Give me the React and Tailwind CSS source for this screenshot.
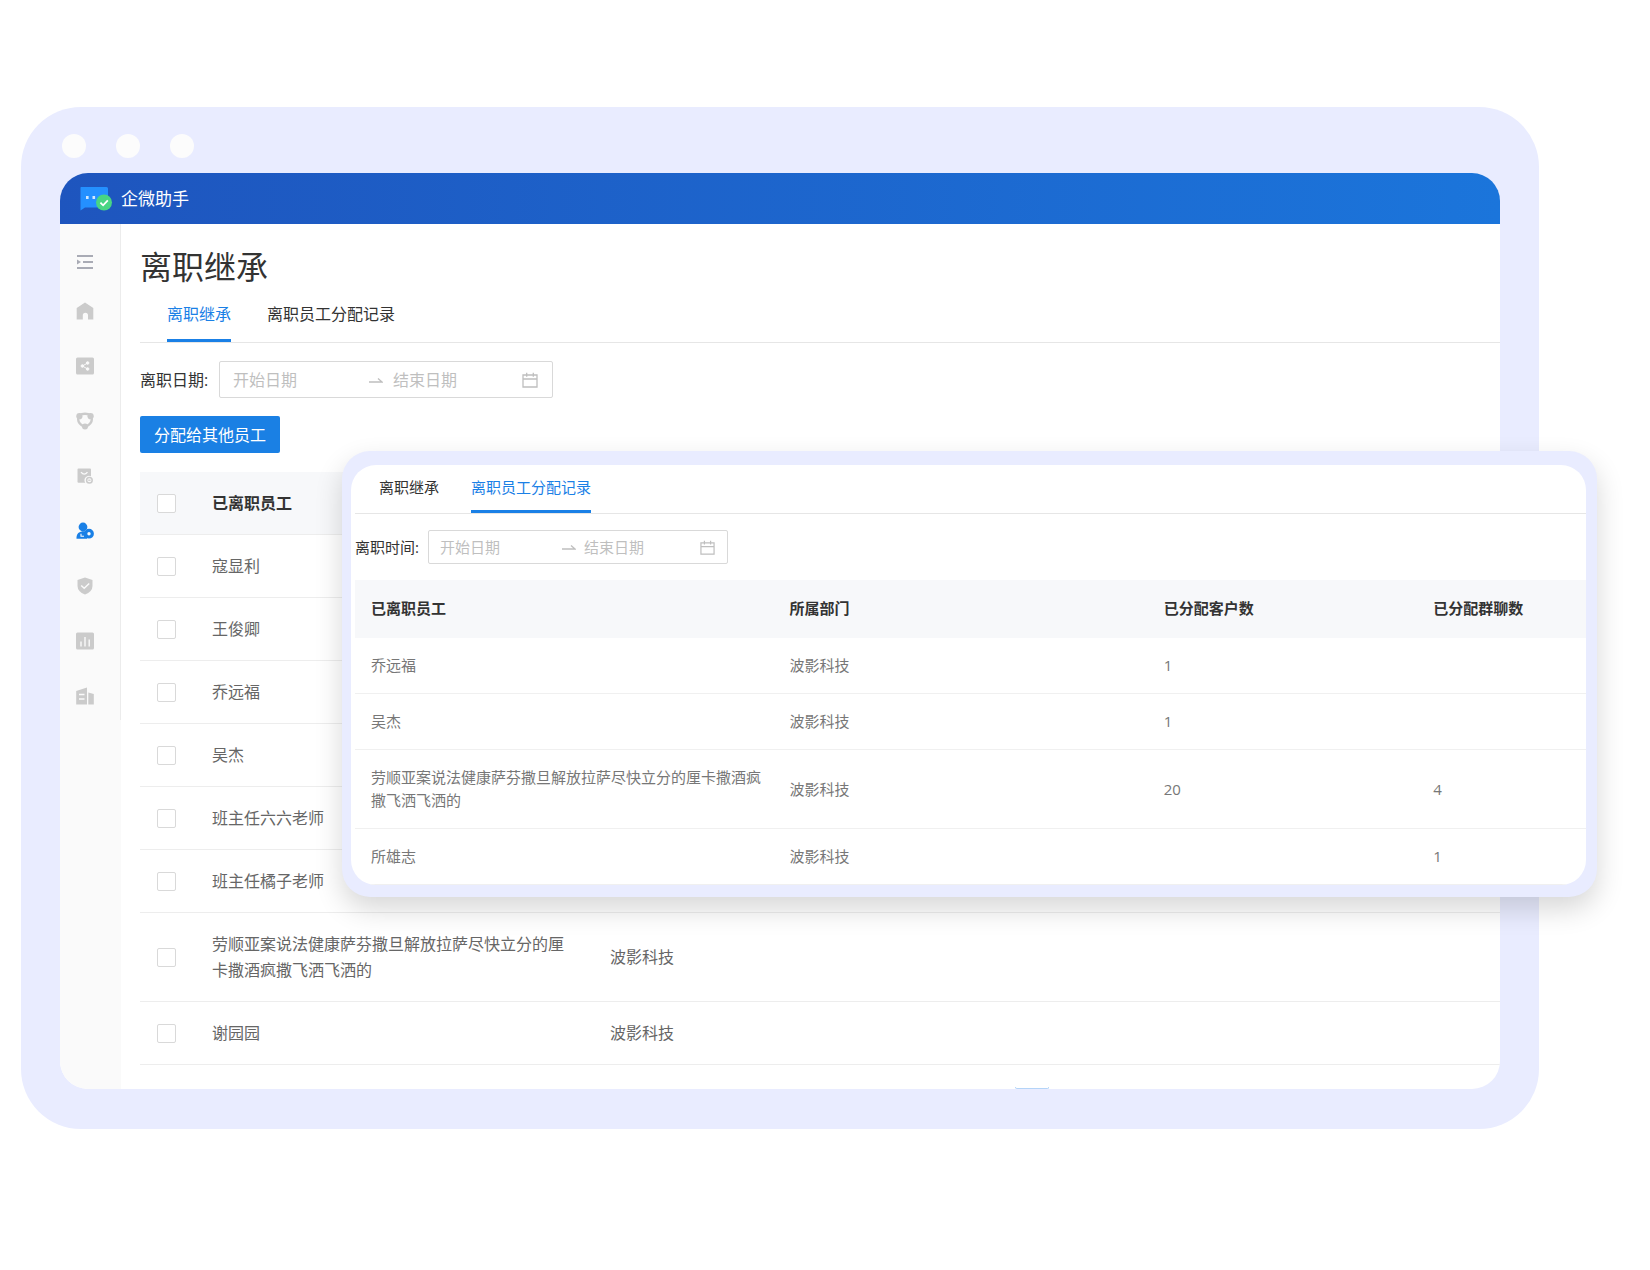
import React from "react";

const formerStaff = [
  { name: "寇显利" },
  { name: "王俊卿" },
  { name: "乔远福" },
  { name: "吴杰" },
  { name: "班主任六六老师" },
  { name: "班主任橘子老师" },
  { name: "劳顺亚案说法健康萨芬撒旦解放拉萨尽快立分的厘卡撒酒疯撒飞洒飞洒的", dept: "波影科技" },
  { name: "谢园园", dept: "波影科技" },
];

const records = [
  { name: "乔远福", dept: "波影科技", customers: "1", groups: "" },
  { name: "吴杰", dept: "波影科技", customers: "1", groups: "" },
  { name: "劳顺亚案说法健康萨芬撒旦解放拉萨尽快立分的厘卡撒酒疯撒飞洒飞洒的", dept: "波影科技", customers: "20", groups: "4" },
  { name: "所雄志", dept: "波影科技", customers: "", groups: "1" },
];

const navItems = [
  {
    label: "首页",
    art: <path d="M9 0.5 17.300 6v11.500H12v-4.200a2.600 2.600 0 0 0-5.200 0v4.200H0.700V6z" />,
  },
  {
    label: "引流",
    art: (
      <>
        <rect x="0" y="0.5" width="18" height="17" rx="1.5" />
        <g fill="#fafafa" stroke="#fafafa" strokeWidth="1">
          <path d="M11.5 6 6.5 9l5 3" fill="none" />
          <circle cx="11.6" cy="6" r="1.3" />
          <circle cx="6.4" cy="9" r="1.3" />
          <circle cx="11.6" cy="12" r="1.3" />
        </g>
      </>
    ),
  },
  {
    label: "客户",
    art: (
      <>
        <path d="M9 1.800Q15.800 1.800 15.800 7.500 15.800 12 9 15.200 2.200 12 2.200 7.500 2.200 1.800 9 1.800Z" fill="none" stroke="currentColor" strokeWidth="2.400" />
        <circle cx="3.400" cy="4.200" r="3.100" />
        <circle cx="14.600" cy="4.200" r="3.100" />
        <circle cx="9" cy="14.600" r="3" />
      </>
    ),
  },
  {
    label: "营销",
    art: (
      <>
        <path d="M2.500 1.500h11.500a1 1 0 0 1 1 1v6.700a4.600 4.600 0 0 0-5.800 6.600H2.500a1 1 0 0 1-1-1V2.500a1 1 0 0 1 1-1z" />
        <path d="M5 5.200Q8.200 9.200 11.500 5.200" fill="none" stroke="#fafafa" strokeWidth="1.3" />
        <circle cx="13.400" cy="13.200" r="2.800" fill="none" stroke="currentColor" strokeWidth="1.500" />
        <path d="M12.200 13.200h2.400" stroke="currentColor" strokeWidth="1.200" />
      </>
    ),
  },
  {
    label: "离职继承",
    active: true,
    art: (
      <>
        <circle cx="7" cy="5" r="4.400" />
        <path d="M0.500 16.800v-1.800Q1 10 6.500 9.200h4.500v7.600z" />
        <path d="M5 11.800v2.400h3" fill="none" stroke="#fafafa" strokeWidth="1.100" />
        <circle cx="13" cy="11.700" r="3.300" fill="#fafafa" stroke="currentColor" strokeWidth="3.200" />
      </>
    ),
  },
  {
    label: "风控",
    art: (
      <>
        <path d="M9 0.5 16.500 3v6q0 5.500-7.500 8.600Q1.500 14.500 1.500 9V3z" />
        <path d="m5.200 8.500 3 2.800 5-4.800" fill="none" stroke="#fafafa" strokeWidth="1.500" />
      </>
    ),
  },
  {
    label: "统计",
    art: (
      <>
        <rect x="0" y="0.5" width="18" height="17" rx="1.5" />
        <path d="M5 9.500v5M9 5v9.500M13.200 7.500v7" stroke="#fafafa" strokeWidth="1.400" />
      </>
    ),
  },
  {
    label: "企业",
    art: (
      <>
        <path d="M0.200 4 11 0.500v17H0.200z" />
        <path d="M3 7.500h5.500M3 12h5.500" stroke="#fafafa" strokeWidth="1.400" />
        <path d="M12.300 5.500 17.800 7v10.500h-5.500z" />
      </>
    ),
  },
];

function CalendarIcon({ className }) {
  return (
    <svg viewBox="0 0 16 16" className={className} fill="none" stroke="currentColor" strokeWidth="1.3" aria-hidden="true">
      <path d="M1 3h14v12H1zM1 7h14M4.700 0.800v4M11.300 0.800v4" />
    </svg>
  );
}

function ArrowIcon() {
  return (
    <svg viewBox="0 0 14 8" className="h-2 w-3.5 shrink-0" fill="none" stroke="currentColor" strokeWidth="1.3" aria-hidden="true">
      <path d="M0 6h13L9 2.400" />
    </svg>
  );
}

function Logo() {
  return (
    <svg viewBox="0 0 34 26" className="h-[26px] w-[34px]" aria-hidden="true">
      <path d="M2 1h25.500a1.500 1.500 0 0 1 1.500 1.500V21.500H6l-4.500 3V1.500z" fill="#2490ff" />
      <path d="M7 10h2.600v3H7zM13.500 10h2.600v3h-2.600z" fill="#d3e9ff" />
      <circle cx="25" cy="16.500" r="8" fill="#48d584" />
      <path d="m21.400 16.600 2.700 2.700 4.700-4.900" fill="none" stroke="#fff" strokeWidth="1.800" />
    </svg>
  );
}

export default function App() {
  return (
    <div className="w-full overflow-hidden bg-white pt-[107px] pr-[111px] pb-[141px] pl-[21px] font-['Open_Sans','Noto_Sans_CJK_SC',sans-serif] text-base text-[#333]">
      <div className="relative rounded-[60px] bg-[#e9ecff] px-[39px] pt-[27px] pb-10">
        <div className="flex gap-[30px] pl-0.5">
          <span className="size-6 rounded-full bg-[#fcfcfc]" />
          <span className="size-6 rounded-full bg-[#fcfcfc]" />
          <span className="size-6 rounded-full bg-[#fcfcfc]" />
        </div>

        <div className="mt-[15px] overflow-hidden rounded-[28px] bg-white">
          <header className="flex h-[51px] items-center gap-2 bg-linear-to-r from-[#1e55be] to-[#1b75db] pl-[19px] text-white">
            <Logo />
            <span className="text-[17px]">企微助手</span>
          </header>

          <div className="flex">
            <aside className="w-[61px] shrink-0 bg-[#fafafa]">
              <nav className="flex h-[496px] flex-col items-center border-r border-[#ececec] pt-[29px] pr-2.5 text-[#cbcbcb]">
                <button aria-label="展开菜单" className="h-[18px] text-[#a9abb5]">
                  <svg viewBox="0 0 18 18" className="size-[18px]" fill="none" stroke="currentColor" strokeWidth="1.8">
                    <path d="M1 3h16M7 9h10M1 15h16" />
                    <path d="M1 6.500v5L5 9z" fill="currentColor" stroke="none" />
                  </svg>
                </button>
                <div className="mt-[31px] flex flex-col gap-[37px]">
                  {navItems.map((item) => (
                    <a key={item.label} href="#" aria-label={item.label} className={item.active ? "text-[#1a80e6]" : ""}>
                      <svg viewBox="0 0 18 18" className="size-[18px]" fill="currentColor">
                        {item.art}
                      </svg>
                    </a>
                  ))}
                </div>
              </nav>
            </aside>

            <main className="min-w-0 flex-1 pl-[19px]">
              <h1 className="pt-[19px] text-[32px] leading-[48px]">离职继承</h1>
              <div role="tablist" className="flex gap-9 border-b border-[#e6e6e6] pl-[27px]">
                <button role="tab" aria-selected="true" className="h-[51px] border-b-3 border-[#1a80e6] pb-0.5 text-[#1a80e6]">
                  离职继承
                </button>
                <button role="tab" aria-selected="false" className="h-[51px] border-b-3 border-transparent pb-0.5">
                  离职员工分配记录
                </button>
              </div>

              <div className="mt-[18px] flex items-center">
                <label htmlFor="leave-date" className="w-[79px]">离职日期:</label>
                <div className="flex h-[37px] w-[334px] items-center rounded-[2px] border border-[#d9d9d9] pr-3.5 pl-[13px] text-[#bfbfbf]">
                  <input id="leave-date" placeholder="开始日期" className="w-[136px] outline-none placeholder:text-[#bfbfbf]" />
                  <ArrowIcon />
                  <input aria-label="结束日期" placeholder="结束日期" className="ml-2.5 min-w-0 flex-1 outline-none placeholder:text-[#bfbfbf]" />
                  <CalendarIcon className="size-4" />
                </div>
              </div>

              <button className="mt-[18px] flex h-[37px] w-[140px] items-center justify-center rounded-[2px] bg-[#1a80e4] text-white">
                分配给其他员工
              </button>

              <table className="mt-[19px] w-full table-fixed border-separate border-spacing-0 text-left text-[#666]">
                <colgroup>
                  <col className="w-[55px]" />
                  <col className="w-[398px]" />
                  <col />
                </colgroup>
                <thead>
                  <tr className="h-[63px] bg-[#f7f8fa] text-[#333]">
                    <th className="border-b border-[#ededed] pl-[17px]">
                      <input type="checkbox" aria-label="全选" className="block size-[19px] appearance-none rounded-[2px] border border-[#d9d9d9] bg-white" />
                    </th>
                    <th className="border-b border-[#ededed] px-[17px] font-bold">已离职员工</th>
                    <th className="border-b border-[#ededed]" />
                  </tr>
                </thead>
                <tbody>
                  {formerStaff.map((p) => (
                    <tr key={p.name}>
                      <td className="border-b border-[#ededed] pl-[17px]">
                        <input type="checkbox" aria-label={p.name} className="block size-[19px] appearance-none rounded-[2px] border border-[#d9d9d9] bg-white" />
                      </td>
                      <td className="border-b border-[#ededed] px-[17px] py-[18px] leading-[26px]">{p.name}</td>
                      <td className="border-b border-[#ededed] px-[17px] py-[18px] leading-[26px]">{p.dept}</td>
                    </tr>
                  ))}
                </tbody>
              </table>
              <div className="flex h-6 items-end justify-end pr-[451px]">
                <span className="h-0.5 w-[34px] rounded-b-[2px] border-x border-b border-[#b4d4f8]" />
              </div>
            </main>
          </div>
        </div>

        <section className="absolute top-[344px] right-[-58px] left-[321px] rounded-[28px] bg-[#e9ecff] pt-[14px] pr-[11px] pb-3 pl-[9px] text-[15px] shadow-[0_12px_28px_rgba(0,0,0,0.16)]">
          <div className="overflow-hidden rounded-[25px] bg-white pl-1">
            <div role="tablist" className="flex gap-8 border-b border-[#e6e6e6] pl-6">
              <button role="tab" aria-selected="false" className="h-12 border-b-3 border-transparent">
                离职继承
              </button>
              <button role="tab" aria-selected="true" className="h-12 border-b-3 border-[#1a80e6] text-[#1a80e6]">
                离职员工分配记录
              </button>
            </div>

            <div className="mt-4 flex items-center">
              <label htmlFor="leave-time" className="w-[73px]">离职时间:</label>
              <div className="flex h-[34px] w-[300px] items-center rounded-[2px] border border-[#d9d9d9] pr-3 pl-[11px] text-[#bfbfbf]">
                <input id="leave-time" placeholder="开始日期" className="w-[122px] outline-none placeholder:text-[#bfbfbf]" />
                <ArrowIcon />
                <input aria-label="结束日期" placeholder="结束日期" className="ml-2 min-w-0 flex-1 outline-none placeholder:text-[#bfbfbf]" />
                <CalendarIcon className="size-[15px]" />
              </div>
            </div>

            <table className="mt-4 w-full table-fixed border-separate border-spacing-0 text-left text-[#777]">
              <colgroup>
                <col className="w-[34%]" />
                <col className="w-[30.4%]" />
                <col className="w-[21.9%]" />
                <col />
              </colgroup>
              <thead>
                <tr className="h-[58px] bg-[#f7f8fa] text-[#333]">
                  <th className="pb-0.5 pl-4 font-bold">已离职员工</th>
                  <th className="pb-0.5 pl-4 font-bold">所属部门</th>
                  <th className="pb-0.5 pl-4 font-bold">已分配客户数</th>
                  <th className="pb-0.5 pl-4 font-bold">已分配群聊数</th>
                </tr>
              </thead>
              <tbody>
                {records.map((r) => (
                  <tr key={r.name}>
                    <td className="border-b border-[#f0f0f0] py-4 pr-2 pl-4 leading-[23px]">{r.name}</td>
                    <td className="border-b border-[#f0f0f0] py-4 pl-4 leading-[23px]">{r.dept}</td>
                    <td className="border-b border-[#f0f0f0] py-4 pl-4 leading-[23px]">{r.customers}</td>
                    <td className="border-b border-[#f0f0f0] py-4 pl-4 leading-[23px]">{r.groups}</td>
                  </tr>
                ))}
              </tbody>
            </table>
          </div>
        </section>
      </div>
    </div>
  );
}
